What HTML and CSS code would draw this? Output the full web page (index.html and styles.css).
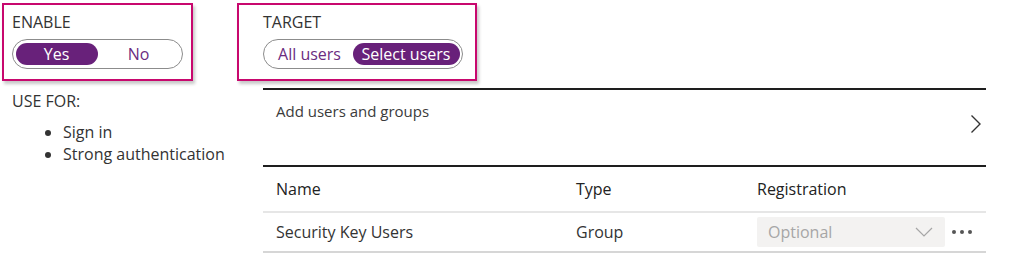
FILE: index.html
```html
<!DOCTYPE html>
<html>
<head>
<meta charset="utf-8">
<link rel="stylesheet" href="styles.css">
</head>
<body>
<div class="page">
  <div class="left">
    <div class="box box-enable">
      <div class="label">ENABLE</div>
      <div class="pill">
        <span class="seg seg-on seg-yes">Yes</span>
        <span class="seg seg-no">No</span>
      </div>
    </div>
    <div class="usefor">USE FOR:</div>
    <ul class="uses">
      <li>Sign in</li>
      <li>Strong authentication</li>
    </ul>
  </div>
  <div class="right">
    <div class="box box-target">
      <div class="label">TARGET</div>
      <div class="pill pill-target">
        <span class="seg seg-all">All users</span>
        <span class="seg seg-on seg-select">Select users</span>
      </div>
    </div>
    <div class="panel">
      <div class="add-row">
        <span class="add-text">Add users and groups</span>
        <svg class="chev-right" width="12" height="20" viewBox="0 0 12 20"><path d="M1.5 1.5 L10 10 L1.5 18.5" fill="none" stroke="#333" stroke-width="1.4"/></svg>
      </div>
      <div class="table">
        <div class="row head">
          <span>Name</span>
          <span>Type</span>
          <span>Registration</span>
          <span></span>
        </div>
        <div class="row data">
          <span>Security Key Users</span>
          <span>Group</span>
          <span class="select">
            <span class="select-text">Optional</span>
            <svg class="chev-down" width="18" height="10" viewBox="0 0 18 10"><path d="M1 1 L9 9 L17 1" fill="none" stroke="#a6a6a6" stroke-width="1.2"/></svg>
          </span>
          <span class="more"><i></i><i></i><i></i></span>
        </div>
      </div>
    </div>
  </div>
</div>
</body>
</html>
```
FILE: styles.css
```css
html, body {
  margin: 0;
  padding: 0;
  background: #fff;
}
body {
  font-family: "Open Sans", "Noto Sans", sans-serif;
  font-size: 16px;
  color: #333;
}
.page {
  display: flex;
  padding-top: 3px;
}
.left {
  width: 237px;
  padding-left: 2px;
  box-sizing: border-box;
}
.box {
  border: 2px solid #c8086e;
  box-shadow: 2px 3px 3px rgba(0, 0, 0, 0.22);
  box-sizing: border-box;
  height: 78px;
  background: #fff;
}
.box-enable {
  width: 191px;
  padding: 7px 0 0 8px;
}
.box-target {
  width: 240px;
  padding: 7px 0 0 24px;
}
.label {
  font-size: 16px;
  line-height: 20px;
  color: #333;
  height: 27px;
}
.pill {
  display: flex;
  width: 171px;
  height: 30px;
  border: 1.5px solid #8c8c8c;
  border-radius: 15px;
  box-sizing: border-box;
  padding: 2.5px;
}
.pill-target {
  width: 200px;
}
.seg {
  display: flex;
  align-items: center;
  justify-content: center;
  height: 22px;
  border-radius: 11px;
  font-size: 16px;
  color: #6b2c7f;
}
.seg-yes, .seg-no {
  flex: 1;
}
.seg-all {
  width: 86px;
}
.seg-select {
  flex: 1;
}
.seg-on {
  background: #68217a;
  color: #fff;
}
.usefor {
  margin-top: 9px;
  padding-left: 10px;
  line-height: 22px;
}
.uses {
  margin: 9px 0 0 0;
  padding-left: 61px;
  line-height: 22px;
}
.right {
  display: flex;
  flex-direction: column;
}
.panel {
  margin-left: 26px;
  margin-top: 7px;
  width: 723px;
}
.add-row {
  display: flex;
  justify-content: space-between;
  align-items: flex-start;
  border-top: 2px solid #1e1e1e;
  border-bottom: 2px solid #1e1e1e;
  height: 79px;
  box-sizing: border-box;
  padding: 11px 4px 0 13px;
}
.add-text {
  font-size: 15px;
  line-height: 20px;
  color: #3b3b3b;
}
.chev-right {
  margin-top: 13px;
}
.row {
  display: grid;
  grid-template-columns: 300px 181px 188px 1fr;
  align-items: center;
  padding-left: 13px;
  box-sizing: border-box;
}
.head {
  height: 46px;
  color: #222;
  border-bottom: 2px solid #e6e6e6;
}
.data {
  height: 40px;
  color: #333;
  border-bottom: 2px solid #d6d6d6;
}
.select {
  display: flex;
  justify-content: space-between;
  align-items: center;
  height: 30px;
  background: #f3f2f1;
  border-radius: 2px;
  padding: 0 12px 0 11px;
  box-sizing: border-box;
}
.select-text {
  color: #a6a6a6;
}
.more {
  display: flex;
  gap: 4px;
  padding-left: 7px;
}
.more i {
  width: 4px;
  height: 4px;
  border-radius: 50%;
  background: #555;
}
```
